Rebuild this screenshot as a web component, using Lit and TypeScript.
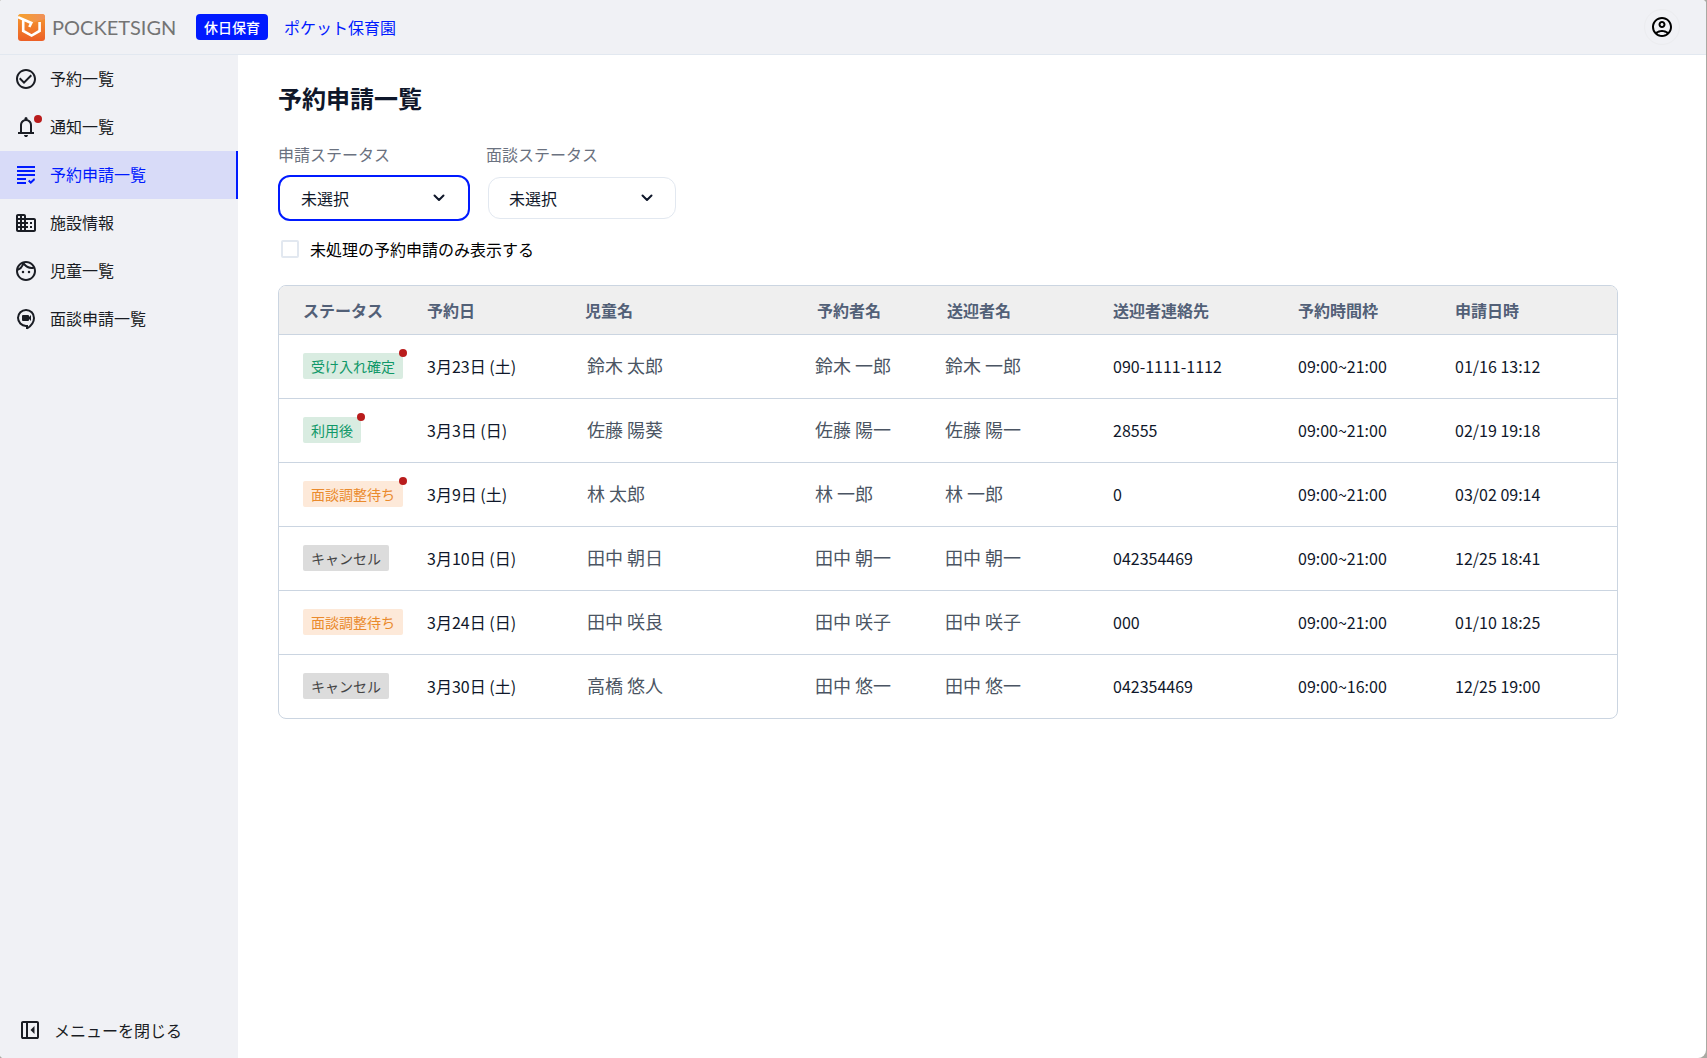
import { LitElement, html, css, svg, nothing } from "lit";
import { customElement, property } from "lit/decorators.js";
import { classMap } from "lit/directives/class-map.js";

const icons = {
  check: svg`<path d="M16.59 7.58 10 14.17l-3.59-3.58L5 12l5 5 8-8zM12 2C6.48 2 2 6.48 2 12s4.48 10 10 10 10-4.48 10-10S17.52 2 12 2zm0 18c-4.42 0-8-3.58-8-8s3.58-8 8-8 8 3.58 8 8-3.58 8-8 8z"/>`,
  bell: svg`<path d="M4 19v-2h2v-7q0-2.075 1.25-3.688Q8.500 4.700 10.500 4.200v-.7q0-.625.437-1.062Q11.375 2 12 2t1.063.438q.437.437.437 1.062v.7q2 .5 3.250 2.112Q18 7.925 18 10v7h2v2zm8 3q-.825 0-1.412-.587Q10 20.825 10 20h4q0 .825-.587 1.413Q12.825 22 12 22zm-4-5h8v-7q0-1.650-1.175-2.825Q13.650 6 12 6T9.175 7.175Q8 8.350 8 10z"/>`,
  grading: svg`<path d="M3 7h18v2H3zM3 3h18v2H3zM3 11h18v2H3zM3 15h9v2H3zM3 19h9v2H3zM16.750 21 14 18.250l1.400-1.400 1.350 1.350L20.200 15 21 17z"/>`,
  building: svg`<path d="M12 7V5c0-1.100-.9-2-2-2H4c-1.100 0-2 .9-2 2v14c0 1.100.9 2 2 2h16c1.100 0 2-.9 2-2V9c0-1.100-.9-2-2-2zM6 19H4v-2h2zm0-4H4v-2h2zm0-4H4V9h2zm0-4H4V5h2zm4 12H8v-2h2zm0-4H8v-2h2zm0-4H8V9h2zm0-4H8V5h2zm10 12h-8v-2h2v-2h-2v-2h2v-2h-2V9h8zm-2-8h-2v2h2zm0 4h-2v2h2z"/>`,
  face: svg`<path d="M10.250 13a1.250 1.250 0 1 1-2.500 0 1.250 1.250 0 0 1 2.500 0zM15 11.750a1.250 1.250 0 1 0 0 2.500 1.250 1.250 0 0 0 0-2.500zM22 12c0 5.520-4.480 10-10 10S2 17.520 2 12 6.480 2 12 2s10 4.480 10 10zM10.660 4.120C12.060 6.440 14.600 8 17.500 8c.46 0 .91-.05 1.340-.12C17.440 5.560 14.900 4 12 4c-.46 0-.91.05-1.340.12zM4.420 9.470c1.710-.97 3.030-2.550 3.660-4.440-1.710.97-3.030 2.550-3.660 4.440zM20 12c0-.78-.12-1.530-.33-2.240-.7.150-1.420.240-2.170.240a9.970 9.970 0 0 1-7.760-3.690A10.020 10.020 0 0 1 4 11.860c.01.040 0 .090 0 .140 0 4.410 3.590 8 8 8s8-3.590 8-8z"/>`,
  video: svg`<path fill="none" stroke="currentColor" stroke-width="2" d="M13 22v-3.100h-1a8 8 0 1 1 8-7.900c0 4.300-3 8-7 10.500z"/><path d="M9 8h5q1 0 1 1v1l2-2v6l-2-2v1q0 1-1 1H9q-1 0-1-1V9q0-1 1-1z"/>`,
  panel: svg`<path d="M16.500 16V8l-4 4zM5 21q-.825 0-1.412-.587Q3 19.825 3 19V5q0-.825.588-1.413Q4.175 3 5 3h14q.825 0 1.413.587Q21 4.175 21 5v14q0 .825-.587 1.413Q19.825 21 19 21zm3-2V5H5v14zm2 0h9V5h-9z"/>`,
  account: svg`<path d="M12 2C6.480 2 2 6.480 2 12s4.480 10 10 10 10-4.480 10-10S17.520 2 12 2zM7.350 18.500C8.660 17.560 10.260 17 12 17s3.340.56 4.650 1.500C15.340 19.440 13.740 20 12 20s-3.340-.56-4.650-1.500zm10.790-1.380C16.450 15.800 14.320 15 12 15s-4.450.8-6.140 2.120A7.960 7.960 0 0 1 4 12c0-4.420 3.580-8 8-8s8 3.580 8 8c0 1.950-.7 3.730-1.860 5.120zM12 6c-1.930 0-3.500 1.570-3.500 3.500S10.070 13 12 13s3.500-1.570 3.500-3.500S13.930 6 12 6zm0 5c-.83 0-1.500-.67-1.500-1.500S11.170 8 12 8s1.500.67 1.500 1.500S12.830 11 12 11z"/>`,
};

type IconName = keyof typeof icons;

@customElement("ui-icon")
export class UiIcon extends LitElement {
  static styles = css`
    :host {
      display: block;
      width: 24px;
      height: 24px;
      flex: none;
    }
    .glyph {
      display: block;
      fill: currentColor;
    }
  `;

  @property() name: IconName = "check";

  render() {
    return html`<svg class="glyph" width="24" height="24" viewBox="0 0 24 24" aria-hidden="true">
      ${icons[this.name]}
    </svg>`;
  }
}

interface NavItem {
  icon: IconName;
  label: string;
  unread?: boolean;
  current?: boolean;
}

const navItems: NavItem[] = [
  { icon: "check", label: "予約一覧" },
  { icon: "bell", label: "通知一覧", unread: true },
  { icon: "grading", label: "予約申請一覧", current: true },
  { icon: "building", label: "施設情報" },
  { icon: "face", label: "児童一覧" },
  { icon: "video", label: "面談申請一覧" },
];

type Tone = "green" | "orange" | "gray";

interface Reservation {
  status: string;
  tone: Tone;
  unread: boolean;
  date: string;
  child: string;
  booker: string;
  escort: string;
  contact: string;
  slot: string;
  applied: string;
}

const reservations: Reservation[] = [
  { status: "受け入れ確定", tone: "green", unread: true, date: "3月23日 (土)", child: "鈴木 太郎", booker: "鈴木 一郎", escort: "鈴木 一郎", contact: "090-1111-1112", slot: "09:00~21:00", applied: "01/16 13:12" },
  { status: "利用後", tone: "green", unread: true, date: "3月3日 (日)", child: "佐藤 陽葵", booker: "佐藤 陽一", escort: "佐藤 陽一", contact: "28555", slot: "09:00~21:00", applied: "02/19 19:18" },
  { status: "面談調整待ち", tone: "orange", unread: true, date: "3月9日 (土)", child: "林 太郎", booker: "林 一郎", escort: "林 一郎", contact: "0", slot: "09:00~21:00", applied: "03/02 09:14" },
  { status: "キャンセル", tone: "gray", unread: false, date: "3月10日 (日)", child: "田中 朝日", booker: "田中 朝一", escort: "田中 朝一", contact: "042354469", slot: "09:00~21:00", applied: "12/25 18:41" },
  { status: "面談調整待ち", tone: "orange", unread: false, date: "3月24日 (日)", child: "田中 咲良", booker: "田中 咲子", escort: "田中 咲子", contact: "000", slot: "09:00~21:00", applied: "01/10 18:25" },
  { status: "キャンセル", tone: "gray", unread: false, date: "3月30日 (土)", child: "高橋 悠人", booker: "田中 悠一", escort: "田中 悠一", contact: "042354469", slot: "09:00~16:00", applied: "12/25 19:00" },
];

@customElement("app-root")
export class AppRoot extends LitElement {
  static styles = css`
    :host {
      display: block;
      --blue: #001aff;
      --surface: #f0f1f5;
      --line: #cbd5e1;
      --soft-line: #e2e8f0;
      --ink: #0f172a;
      --alert: #b91c1c;
      font-family: "Noto Sans CJK JP", sans-serif;
      font-size: 16px;
      line-height: 24px;
      color: var(--ink);
      background: #aaa9a3;
    }
    *,
    *::before,
    *::after {
      box-sizing: border-box;
    }
    .app {
      display: grid;
      grid-template: auto 1fr / 238px minmax(0, 1fr);
      min-height: 100vh;
      margin-right: 1px;
      border-radius: 2px 4px 8px 4px;
      background: #fff;
      overflow: hidden;
    }
    .header {
      grid-column: 1 / -1;
      display: flex;
      align-items: center;
      height: 55px;
      padding: 0 26px 0 18px;
      background: var(--surface);
      border-bottom: 1px solid var(--soft-line);
    }
    .brand {
      display: flex;
      align-items: center;
      gap: 7px;
      width: 178px;
      color: #747474;
      font-family: Lato, sans-serif;
      font-size: 20px;
      text-decoration: none;
    }
    .brand-mark {
      display: block;
      flex: none;
    }
    .service {
      padding: 2px 8px;
      border-radius: 4px;
      background: var(--blue);
      color: #fff;
      font-size: 14px;
      font-weight: 500;
      line-height: 22px;
    }
    .facility {
      margin-left: 16px;
      color: var(--blue);
      text-decoration: none;
    }
    .account {
      display: grid;
      place-items: center;
      width: 36px;
      height: 36px;
      margin-left: auto;
      padding: 0;
      border: 1px solid #ebecef;
      border-radius: 50%;
      background: none;
      color: #000;
    }
    .sidebar {
      display: flex;
      flex-direction: column;
      justify-content: space-between;
      background: var(--surface);
      color: #1a1d24;
    }
    .nav-list {
      margin: 0;
      padding: 0;
      list-style: none;
    }
    .nav-link {
      display: flex;
      align-items: center;
      gap: 12px;
      height: 48px;
      padding: 0 14px;
      color: inherit;
      text-decoration: none;
    }
    .nav-link.current {
      background: #d8dbf8;
      border-right: 2px solid var(--blue);
      color: var(--blue);
    }
    .nav-label {
      padding-bottom: 2px;
    }
    .nav-icon,
    .tag {
      position: relative;
    }
    .dot {
      position: absolute;
      top: -4px;
      right: -4px;
      width: 8px;
      height: 8px;
      border-radius: 50%;
      background: var(--alert);
    }
    .nav-icon .dot {
      top: 0;
    }
    .collapse {
      display: flex;
      align-items: center;
      gap: 12px;
      height: 56px;
      padding: 0 18px;
      border: 0;
      background: none;
      color: inherit;
      font: inherit;
    }
    .main {
      padding: 27px 88px 40px 40px;
    }
    .title {
      margin: 0 0 28px;
      font-size: 24px;
      font-weight: 700;
      line-height: 32px;
    }
    .filters {
      display: flex;
      gap: 16px;
    }
    .filter {
      display: flex;
      flex-direction: column;
      gap: 9px;
      width: 192px;
    }
    .filter-label {
      color: #6b7280;
    }
    .picker {
      display: grid;
      align-items: center;
      padding: 2px;
    }
    .select {
      grid-area: 1 / 1;
      appearance: none;
      width: 100%;
      height: 42px;
      margin: 0;
      padding: 0 40px 0 20px;
      border: 1px solid var(--soft-line);
      border-radius: 12px;
      background: #fff;
      color: inherit;
      font: inherit;
    }
    .select.active {
      border-color: #fff;
      border-radius: 10px;
      outline: 2px solid var(--blue);
    }
    .chevron {
      grid-area: 1 / 1;
      justify-self: end;
      margin-right: 21px;
      pointer-events: none;
    }
    .pending {
      display: flex;
      align-items: center;
      gap: 11px;
      width: fit-content;
      margin: 16px 0 24px;
      padding-left: 3px;
      color: #000;
    }
    .checkbox {
      appearance: none;
      width: 18px;
      height: 18px;
      margin: 0;
      border: 2px solid var(--soft-line);
      border-radius: 2px;
      background: #fff;
    }
    .checkbox:checked {
      background: var(--blue);
    }
    .table {
      width: 100%;
      table-layout: fixed;
      border: 1px solid var(--line);
      border-radius: 8px;
      border-spacing: 0;
      overflow: hidden;
      text-align: left;
    }
    .col-status { width: 148px; }
    .col-date { width: 158px; }
    .col-child { width: 228px; }
    .col-booker { width: 130px; }
    .col-escort { width: 170px; }
    .col-contact { width: 185px; }
    .col-slot { width: 157px; }
    .col-applied { width: 162px; }
    .th {
      height: 48px;
      padding: 0;
      background: #efefef;
      color: #526077;
      font-weight: 700;
    }
    .td {
      height: 64px;
      padding: 0 0 2px;
      border-top: 1px solid var(--line);
    }
    .th:first-child,
    .td:first-child {
      padding-left: 24px;
    }
    .th.inset {
      padding-left: 4px;
    }
    .name {
      padding: 0 0 4px 2px;
      color: #4b5563;
      font-size: 18px;
    }
    .tag {
      display: inline-block;
      padding: 2px 8px;
      border-radius: 2px;
      font-size: 14px;
      line-height: 22px;
      vertical-align: middle;
    }
    .tag.green {
      background: #d9ece1;
      color: #109868;
    }
    .tag.orange {
      background: #fde9d9;
      color: #ea8a2c;
    }
    .tag.gray {
      background: #dcdcdc;
      color: #444;
    }
  `;

  private renderNavItem(item: NavItem) {
    return html`<li>
      <a
        class=${classMap({ "nav-link": true, current: !!item.current })}
        href="#"
        aria-current=${item.current ? "page" : nothing}
      >
        <span class="nav-icon">
          <ui-icon name=${item.icon}></ui-icon>
          ${item.unread ? html`<span class="dot"></span>` : nothing}
        </span>
        <span class="nav-label">${item.label}</span>
      </a>
    </li>`;
  }

  private renderFilter(id: string, label: string, active: boolean) {
    return html`<div class="filter">
      <label class="filter-label" for=${id}>${label}</label>
      <div class="picker">
        <select id=${id} class=${classMap({ select: true, active })}>
          <option>未選択</option>
        </select>
        <svg class="chevron" width="16" height="16" viewBox="0 0 16 16" aria-hidden="true">
          <path d="M3.500 5.500 8 10l4.500-4.500" fill="none" stroke="#0f172a" stroke-width="2" stroke-linecap="round" stroke-linejoin="round" />
        </svg>
      </div>
    </div>`;
  }

  private renderRow(row: Reservation) {
    return html`<tr>
      <td class="td">
        <span class="tag ${row.tone}">${row.status}${row.unread ? html`<span class="dot"></span>` : nothing}</span>
      </td>
      <td class="td">${row.date}</td>
      <td class="td name">${row.child}</td>
      <td class="td name">${row.booker}</td>
      <td class="td name">${row.escort}</td>
      <td class="td">${row.contact}</td>
      <td class="td">${row.slot}</td>
      <td class="td">${row.applied}</td>
    </tr>`;
  }

  render() {
    return html`<div class="app">
      <header class="header">
        <a class="brand" href="#">
          <svg class="brand-mark" width="27" height="27" viewBox="0 0 27 27" aria-hidden="true">
            <defs>
              <linearGradient id="mark" x1="0" y1="0" x2="0" y2="1">
                <stop offset="0" stop-color="#f59a2f" />
                <stop offset="1" stop-color="#ec5f26" />
              </linearGradient>
              <linearGradient id="flap" x1="0" y1="0" x2="1" y2="0">
                <stop offset="0" stop-color="#f6a12c" />
                <stop offset="1" stop-color="#f0905a" />
              </linearGradient>
            </defs>
            <rect width="27" height="27" rx="3" fill="url(#mark)" />
            <path d="M3 0h21q3 0 3 3v2L14 9 0 2.500Q.5 0 3 0z" fill="url(#flap)" />
            <path d="M0 3.200 13.300 9l-2 4M5.200 6v11l8.400 4.600 8-4.600V8" fill="none" stroke="#fff" stroke-width="2.600" />
          </svg>
          POCKETSIGN
        </a>
        <span class="service">休日保育</span>
        <a class="facility" href="#">ポケット保育園</a>
        <button class="account" type="button" aria-label="アカウント">
          <ui-icon name="account"></ui-icon>
        </button>
      </header>

      <aside class="sidebar">
        <nav>
          <ul class="nav-list">
            ${navItems.map((item) => this.renderNavItem(item))}
          </ul>
        </nav>
        <button class="collapse" type="button">
          <ui-icon name="panel"></ui-icon>
          メニューを閉じる
        </button>
      </aside>

      <main class="main">
        <h1 class="title">予約申請一覧</h1>
        <div class="filters">
          ${this.renderFilter("application-status", "申請ステータス", true)}
          ${this.renderFilter("interview-status", "面談ステータス", false)}
        </div>
        <label class="pending">
          <input class="checkbox" type="checkbox" />
          未処理の予約申請のみ表示する
        </label>
        <table class="table">
          <colgroup>
            <col class="col-status" />
            <col class="col-date" />
            <col class="col-child" />
            <col class="col-booker" />
            <col class="col-escort" />
            <col class="col-contact" />
            <col class="col-slot" />
            <col class="col-applied" />
          </colgroup>
          <thead>
            <tr>
              <th class="th" scope="col">ステータス</th>
              <th class="th" scope="col">予約日</th>
              <th class="th" scope="col">児童名</th>
              <th class="th inset" scope="col">予約者名</th>
              <th class="th inset" scope="col">送迎者名</th>
              <th class="th" scope="col">送迎者連絡先</th>
              <th class="th" scope="col">予約時間枠</th>
              <th class="th" scope="col">申請日時</th>
            </tr>
          </thead>
          <tbody>
            ${reservations.map((row) => this.renderRow(row))}
          </tbody>
        </table>
      </main>
    </div>`;
  }
}
